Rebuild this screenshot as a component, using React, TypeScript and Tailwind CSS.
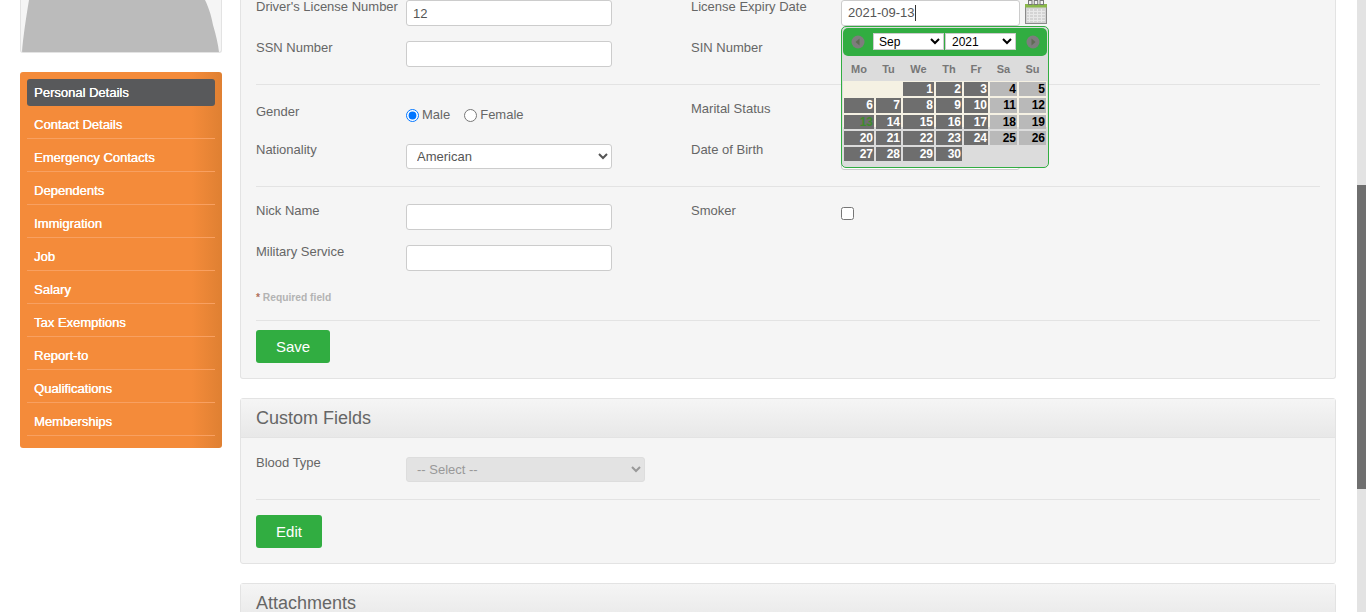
const menuItems = [
	"Contact Details",
	"Emergency Contacts",
	"Dependents",
	"Immigration",
	"Job",
	"Salary",
	"Tax Exemptions",
	"Report-to",
	"Qualifications",
	"Memberships",
];

const days = [
	[null, null, 1, 2, 3, 4, 5],
	[6, 7, 8, 9, 10, 11, 12],
	[13, 14, 15, 16, 17, 18, 19],
	[20, 21, 22, 23, 24, 25, 26],
	[27, 28, 29, 30, null, null, null],
];

const inputCls = "block h-[26px] rounded-[3px] border border-[#cccccc] bg-white px-[6px] text-[13px] text-[#555555]";
const selectCls = "block h-[25px] rounded-[3px] border border-[#cccccc] bg-white pl-[6px] text-[13px] text-[#555555]";

const Label = ({ children, className = "-mt-[2px]" }: { children: string; className?: string }) => (
	<label className={`block whitespace-nowrap text-[13px] leading-[18px] text-[#666666] ${className}`}>{children}</label>
);

type RowProps = {
	left: React.ReactNode;
	right?: React.ReactNode;
	label: string;
	other?: string;
	labelCls?: string;
	otherCls?: string;
};

const Row = ({ left, right, label, other, labelCls, otherCls }: RowProps) => (
	<div className="flex h-[41px]">
		<div className="w-[150px]">
			<Label className={labelCls}>{label}</Label>
		</div>
		<div className="w-[285px]">{left}</div>
		{other && (
			<div className="w-[150px]">
				<Label className={otherCls}>{other}</Label>
			</div>
		)}
		{right}
	</div>
);

const Sidebar = () => (
	<div className="ml-5 w-[202px] shrink-0">
		<div className="h-[53px] overflow-hidden rounded-b-[3px] border-x border-b border-[#e3e3e3] bg-[#f5f5f5]">
			<svg viewBox="0 0 200 52" className="block h-[52px] w-[200px]">
				<path d="M8 0 L184 0 C187 6 190 14 192 25 C195 35 197 44 198 52 L1 52 C2 38 5 18 8 0Z" fill="#bbbbbb" />
			</svg>
		</div>
		<div className="mt-[19px] h-[376px] rounded-[3px] bg-[linear-gradient(to_right,#f48b3a_0%,#f48b3a_85%,#df8032_100%)] px-[7px] pt-[7px]">
			<div className="flex h-[27px] items-center rounded-[3px] bg-[#58595b] px-[7px] text-[13px] text-white [text-shadow:0.3px_0_0_#ffffff]">
				Personal Details
			</div>
			{menuItems.map((item) => (
				<div
					key={item}
					className="flex h-[33px] items-center border-b border-[#f8a061] px-[7px] pt-[5px] text-[13px] text-white [text-shadow:0.3px_0_0_#ffffff]"
				>
					{item}
				</div>
			))}
		</div>
	</div>
);

const CalendarIcon = () => (
	<svg viewBox="0 0 22 24" className="h-[24px] w-[22px] shrink-0">
		<rect x="0.5" y="6.5" width="21" height="17" fill="#d4d4d4" stroke="#8a8a8a" />
		<rect x="0" y="4" width="22" height="3.5" fill="#8ab84a" />
		<rect x="3.5" y="0.5" width="3.5" height="4" fill="#f2f2f2" stroke="#777777" strokeWidth="1" />
		<rect x="9.25" y="0.5" width="3.5" height="4" fill="#f2f2f2" stroke="#777777" strokeWidth="1" />
		<rect x="15" y="0.5" width="3.5" height="4" fill="#f2f2f2" stroke="#777777" strokeWidth="1" />
		<path d="M4.5 9V22M8.5 9V22M12.5 9V22M16.5 9V22M2 11.5H20M2 14.5H20M2 17.5H20M2 20.5H20" stroke="#e9e9e9" strokeWidth="1" />
	</svg>
);

const NavCircle = ({ dir, className }: { dir: "l" | "r"; className: string }) => (
	<svg viewBox="0 0 14 14" className={`h-[14px] w-[14px] shrink-0 ${className}`}>
		<circle cx="7" cy="7" r="6.5" fill="#7d7d7d" />
		<path d={dir === "l" ? "M8.5 3.5 L4.5 7 L8.5 10.5Z" : "M5.5 3.5 L9.5 7 L5.5 10.5Z"} fill="#5f6b55" />
	</svg>
);

const Calendar = () => (
	<div className="absolute left-0 top-[26px] z-10 h-[142px] w-[208px] rounded-[5px] border border-[#31ad41] bg-[#dcdcdc] p-px">
		<div className="flex h-[28px] items-center rounded-[5px] bg-[#31ad41] pl-[8px]">
			<NavCircle dir="l" className="" />
			<select className="-mt-px ml-[8px] h-[17px] w-[71px] border border-[#cccccc] bg-white pl-px text-[12px] text-black" defaultValue="Sep">
				<option>Sep</option>
			</select>
			<select className="-mt-px ml-[1px] h-[17px] w-[71px] border border-[#cccccc] bg-white pl-[2px] text-[12px] text-black" defaultValue="2021">
				<option>2021</option>
			</select>
			<NavCircle dir="r" className="ml-[10px]" />
		</div>
		<div className="grid h-[25px] grid-cols-[30px_25px_31px_26px_24px_27px_27px] items-center gap-x-[2px] pl-px pt-[2px] text-center text-[11px] font-bold text-[#777777]">
			{["Mo", "Tu", "We", "Th", "Fr", "Sa", "Su"].map((d) => (
				<span key={d}>{d}</span>
			))}
		</div>
		<div className="grid auto-rows-[14.25px] grid-cols-[30px_25px_31px_26px_24px_27px_27px] gap-x-[2px] gap-y-[2px] bg-[linear-gradient(to_bottom,#f5f1e3_0px,#f5f1e3_46px,#dcdcdc_46px)] pl-px pt-px">
			{days.flat().map((d, i) => {
				if (d === null) return <div key={i} />;
				const weekend = i % 7 >= 5;
				const today = d === 13;
				return (
					<div
						key={i}
						className={`pr-[1px] text-right text-[12px] font-bold leading-[15px] ${
							weekend ? "bg-[#b9b9b9] text-black" : "bg-[#6e6e6e] text-white"
						} ${today ? "!text-[#3e8a2c]" : ""}`}
					>
						{d}
					</div>
				);
			})}
		</div>
	</div>
);

const App = () => {
	return (
		<div className="flex h-[612px] w-[1366px] overflow-hidden bg-white font-['Liberation_Sans',Arial,sans-serif]">
			<Sidebar />
			<div className="ml-[18px] w-[1096px] shrink-0">
				<div className="h-[379px] rounded-b-[3px] border-x border-b border-[#e3e3e3] bg-[#f5f5f5] px-[15px]">
					<Row
						label="Driver's License Number"
						other="License Expiry Date"
						left={<input className={`${inputCls} w-[206px]`} defaultValue="12" />}
						right={
							<div className="relative flex items-start gap-[5px]">
								<div className={`${inputCls} flex w-[179px] items-center`}>
									2021-09-13<span className="h-[16px] w-px bg-[#333333]" />
								</div>
								<CalendarIcon />
								<Calendar />
							</div>
						}
					/>
					<Row
						label="SSN Number"
						other="SIN Number"
						left={<input className={`${inputCls} w-[206px]`} />}
						right={<input className={`${inputCls} w-[179px]`} />}
					/>
					<div className="mt-[2px] border-t border-[#e3e3e3] pt-[18px]">
						<Row
							label="Gender"
							other="Marital Status"
							labelCls="mt-0"
							otherCls="-mt-[3px]"
							left={
								<div className="flex items-center pt-[3px] text-[13px] leading-[18px] text-[#666666]">
									<input type="radio" name="gender" defaultChecked className="m-0 h-[13px] w-[13px]" />
									<span className="ml-[3px]">Male</span>
									<input type="radio" name="gender" className="ml-[14px] h-[13px] w-[13px]" />
									<span className="ml-[3px]">Female</span>
								</div>
							}
							right={<select className={`${selectCls} w-[179px]`} />}
						/>
						<Row
							label="Nationality"
							other="Date of Birth"
							labelCls="-mt-[3px]"
							otherCls="-mt-[3px]"
							left={
								<select className={`${selectCls} w-[206px]`} defaultValue="American">
									<option>American</option>
								</select>
							}
							right={<input className={`${inputCls} w-[179px]`} />}
						/>
					</div>
					<div className="mt-px border-t border-[#e3e3e3] pt-[17px]">
						<Row
							label="Nick Name"
							other="Smoker"
							left={<input className={`${inputCls} w-[206px]`} />}
							right={<input type="checkbox" className="mt-[3px] h-[13px] w-[13px]" />}
						/>
						<Row label="Military Service" left={<input className={`${inputCls} w-[206px]`} />} />
					</div>
					<div className="pt-[5px] text-[10.25px] leading-[14px] font-bold text-[#b3b3b3]">
						<span className="text-[#b0705a]">*</span> Required field
					</div>
					<div className="mt-[15px] border-t border-[#e3e3e3] pt-[9px]">
						<button className="h-[33px] w-[74px] rounded-[3px] bg-[#31ad41] pt-px text-[15px] text-white">Save</button>
					</div>
				</div>
				<div className="mt-[19px] h-[166px] rounded-[3px] border border-[#e3e3e3] bg-[#f5f5f5]">
					<div className="flex h-[39px] items-center border-b border-[#e3e3e3] bg-[linear-gradient(to_bottom,#f5f5f5,#e8e8e8)] px-[15px] text-[18px] text-[#666666]">
						Custom Fields
					</div>
					<div className="px-[15px] pt-[19px]">
						<div className="flex h-[42px]">
							<div className="w-[150px]">
								<Label className="-mt-[3px]">Blood Type</Label>
							</div>
							<select disabled className="block h-[25px] w-[239px] rounded-[3px] border border-[#dddddd] bg-[#e3e3e3] pl-[6px] text-[13px] text-[#999999] opacity-100" defaultValue="s">
								<option value="s">-- Select --</option>
							</select>
						</div>
						<div className="border-t border-[#e3e3e3] pt-[15px]">
							<button className="h-[33px] w-[66px] rounded-[3px] bg-[#31ad41] pt-px text-[15px] text-white">Edit</button>
						</div>
					</div>
				</div>
				<div className="mt-[19px] rounded-t-[3px] border border-[#e3e3e3] bg-[#f5f5f5]">
					<div className="flex h-[39px] items-center border-b border-[#e3e3e3] bg-[linear-gradient(to_bottom,#f5f5f5,#e8e8e8)] px-[15px] text-[18px] text-[#666666]">
						Attachments
					</div>
				</div>
			</div>
			<div className="ml-[21px] h-[612px] w-[9px] shrink-0 bg-[#e3e3e3] pt-[185px]">
				<div className="h-[304px] bg-[#6f6f6f]" />
			</div>
		</div>
	);
};

export default App;
